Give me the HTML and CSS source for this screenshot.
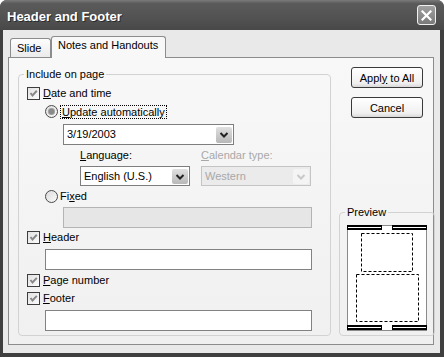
FILE: index.html
```html
<!DOCTYPE html>
<html lang="en">
<head>
    <meta charset="UTF-8">
    <title>Header and Footer</title>
    <link rel="stylesheet" href="styles.css">
</head>
<body>
    <div class="window">
        <div class="titlebar">
            <span class="title">Header and Footer</span>
            <span class="close">
                <svg width="11" height="11" viewBox="0 0 11 11"><path d="M1.5 1.5 L9.5 9.5 M9.5 1.5 L1.5 9.5" stroke="#fff" stroke-width="2.2" stroke-linecap="square"/></svg>
            </span>
        </div>

        <div class="body">
            <div class="tabs">
                <div class="tab">Slide</div>
                <div class="tab active">Notes and Handouts</div>
            </div>

            <div class="panel">
                <fieldset class="group main">
                    <legend>Include on page</legend>

                    <div class="row r-date">
                        <span class="check"></span>
                        <span class="label"><u>D</u>ate and time</span>
                    </div>
                    <div class="row r-auto">
                        <span class="radio on"></span>
                        <span class="label focus"><u>U</u>pdate automatically</span>
                    </div>
                    <div class="combo date-combo">
                        <span class="value">3/19/2003</span>
                        <span class="arrow"></span>
                    </div>
                    <div class="lang-labels">
                        <span class="lang-label"><u>L</u>anguage:</span>
                        <span class="lang-label disabled"><u>C</u>alendar type:</span>
                    </div>
                    <div class="lang-combos">
                        <div class="combo small">
                            <span class="value">English (U.S.)</span>
                            <span class="arrow"></span>
                        </div>
                        <div class="combo small disabled">
                            <span class="value">Western</span>
                            <span class="arrow"></span>
                        </div>
                    </div>
                    <div class="row r-fixed">
                        <span class="radio"></span>
                        <span class="label">Fi<u>x</u>ed</span>
                    </div>
                    <div class="textbox fixed-box disabled"></div>

                    <div class="row r-header">
                        <span class="check"></span>
                        <span class="label"><u>H</u>eader</span>
                    </div>
                    <div class="textbox wide r-header-box"></div>

                    <div class="row r-page">
                        <span class="check"></span>
                        <span class="label"><u>P</u>age number</span>
                    </div>
                    <div class="row r-footer">
                        <span class="check"></span>
                        <span class="label"><u>F</u>ooter</span>
                    </div>
                    <div class="textbox wide r-footer-box"></div>
                </fieldset>

                <div class="side">
                    <div class="buttons">
                        <button>Appl<u>y</u> to All</button>
                        <button class="cancel">Cancel</button>
                    </div>

                    <fieldset class="group preview">
                        <legend>Preview</legend>
                        <svg class="page" width="80" height="106" viewBox="0 0 80 106">
                            <rect x="0.5" y="0.5" width="79" height="105" fill="#fff" stroke="#8a8a8a"/>
                            <!-- header bars -->
                            <rect x="0" y="0" width="35" height="5" fill="#000"/>
                            <rect x="1" y="2" width="33" height="1" fill="#fff"/>
                            <rect x="45" y="0" width="35" height="5" fill="#000"/>
                            <rect x="46" y="2" width="33" height="1" fill="#fff"/>
                            <!-- slide + notes area -->
                            <rect x="14.5" y="8.5" width="51" height="38" fill="none" stroke="#000" stroke-dasharray="3 2"/>
                            <rect x="9.5" y="49.5" width="62" height="47" fill="none" stroke="#000" stroke-dasharray="3 2"/>
                            <!-- footer bars -->
                            <rect x="0" y="100" width="35" height="5" fill="#000"/>
                            <rect x="1" y="102" width="33" height="1" fill="#fff"/>
                            <rect x="45" y="100" width="35" height="5" fill="#000"/>
                            <rect x="46" y="102" width="33" height="1" fill="#fff"/>
                        </svg>
                    </fieldset>
                </div>
            </div>
        </div>
    </div>
</body>
</html>
```

FILE: styles.css
```css
body {
    margin: 0;
    font-family: "Liberation Sans", Arial, sans-serif;
    font-size: 11px;
    line-height: 13px;
    color: #000;
    background-color: #fff;
}

.window {
    width: 444px;
    height: 357px;
    display: flex;
    flex-direction: column;
    background-color: #3f3f3f;
    border-radius: 7px 7px 0 0;
    overflow: hidden;
}

/* title bar */
.titlebar {
    height: 30px;
    flex-shrink: 0;
    display: flex;
    align-items: center;
    justify-content: space-between;
    padding: 0 8px 0 7px;
    background: linear-gradient(#7a7a7a, #5a5a5a 12%, #525252 60%, #484848);
}

.title {
    color: #fff;
    font-weight: bold;
    font-size: 13px;
    text-shadow: 1px 1px 0 #2a2a2a;
    margin-top: 2px;
}

.close {
    width: 17px;
    height: 18px;
    border: 1px solid #f0f0f0;
    border-radius: 3px;
    background: linear-gradient(#a0a0a0, #7a7a7a);
    display: flex;
    align-items: center;
    justify-content: center;
}

/* dialog body */
.body {
    flex: 1;
    background-color: #e9e9e9;
    margin: 0 4px 4px 3px;
    padding: 6px 0 0 5px;
}

.tabs {
    display: flex;
    align-items: flex-end;
    height: 21px;
    padding-left: 2px;
}

.tab {
    box-sizing: border-box;
    height: 19px;
    width: 41px;
    padding: 3px 0 0 6px;
    border: 1px solid #8c8c8c;
    border-bottom: none;
    border-radius: 3px 3px 0 0;
    background: linear-gradient(#fdfdfd, #ebebeb);
    white-space: nowrap;
}

.tab.active {
    height: 22px;
    width: 115px;
    padding: 2px 0 0 6px;
    margin-bottom: -1px;
    background: #f8f8f8;
    position: relative;
    z-index: 1;
}

.panel {
    box-sizing: border-box;
    width: 426px;
    display: flex;
    padding: 9px 7px 8px 9px;
    border: 1px solid #8c8c8c;
    background: linear-gradient(#f8f8f8, #f0f0f0);
}

/* group boxes */
.group {
    margin: 0;
    border: 1px solid #d2d2d2;
    border-radius: 4px;
}

.group legend {
    padding: 0 2px;
    line-height: 13px;
}

.main {
    box-sizing: border-box;
    width: 304px;
    margin-top: 1px;
    padding: 0 8px 4px 8px;
}

.main legend {
    margin-left: -3px;
}

.row {
    display: flex;
    align-items: center;
    height: 13px;
}

.label u,
.lang-label u,
button u {
    text-decoration: underline;
}

.check {
    box-sizing: border-box;
    width: 13px;
    height: 13px;
    margin-right: 3px;
    border: 1px solid #3e3e3e;
    background: linear-gradient(135deg, #e2e2e2, #fbfbfb);
    background-image: url("data:image/svg+xml;utf8,<svg xmlns='http://www.w3.org/2000/svg' width='11' height='11'><path d='M2.5 5 L4.5 7.5 L8.8 2.8' fill='none' stroke='%23888' stroke-width='2'/></svg>"), linear-gradient(135deg, #e2e2e2, #fbfbfb);
}

.radio {
    box-sizing: border-box;
    width: 13px;
    height: 13px;
    margin-right: 2px;
    border: 1px solid #4a4a4a;
    border-radius: 50%;
    background: linear-gradient(135deg, #dcdcdc, #fafafa);
}

.radio.on {
    background: radial-gradient(circle, #8a8a8a 0 2.5px, #b8b8b8 3.5px, transparent 4px), linear-gradient(135deg, #dcdcdc, #fafafa);
}

.focus {
    border: 1px dotted #000;
    padding: 0 1px;
    line-height: 12px;
}

.r-date { margin-top: 6px; }
.r-auto { margin-top: 5px; margin-left: 18px; }
.r-fixed { margin-top: 4px; margin-left: 18px; }
.r-header { margin-top: 3px; }
.r-page { margin-top: 4px; }
.r-footer { margin-top: 5px; }

/* combo boxes */
.combo {
    box-sizing: border-box;
    display: flex;
    align-items: center;
    justify-content: space-between;
    height: 21px;
    border: 1px solid #7e7e7e;
    background-color: #fff;
    padding: 0 1px 0 3px;
}

.date-combo {
    width: 171px;
    margin: 6px 0 0 36px;
}

.arrow {
    width: 16px;
    height: 16px;
    border-radius: 2px;
    background: url("data:image/svg+xml;utf8,<svg xmlns='http://www.w3.org/2000/svg' width='16' height='16'><path d='M4.5 6 L8 9.5 L11.5 6' fill='none' stroke='%23222' stroke-width='2'/></svg>"), linear-gradient(#e0e0e0, #b8b8b8);
}

.lang-labels {
    display: flex;
    margin: 4px 0 0 53px;
}

.lang-label {
    width: 121px;
}

.lang-combos {
    display: flex;
    gap: 11px;
    margin: 4px 0 0 53px;
}

.combo.small {
    width: 110px;
    height: 20px;
}

.combo.small .arrow {
    height: 15px;
}

.disabled {
    color: #a8a8a8;
}

.combo.disabled {
    background-color: #ebebeb;
    border-color: #c4c4c4;
}

.combo.disabled .arrow {
    background: url("data:image/svg+xml;utf8,<svg xmlns='http://www.w3.org/2000/svg' width='16' height='16'><path d='M4.5 6 L8 9.5 L11.5 6' fill='none' stroke='%23c8c8c8' stroke-width='2'/></svg>"), #f4f4f4;
}

/* text boxes */
.textbox {
    box-sizing: border-box;
    height: 21px;
    border: 1px solid #828282;
    background-color: #fff;
}

.textbox.disabled {
    background-color: #e6e6e6;
    border-color: #b4b4b4;
}

.fixed-box {
    width: 249px;
    margin: 4px 0 0 36px;
}

.textbox.wide {
    width: 267px;
    margin: 5px 0 0 18px;
}

/* right column */
.side {
    width: 96px;
    margin-left: 8px;
    display: flex;
    flex-direction: column;
    justify-content: space-between;
}

.buttons {
    display: flex;
    flex-direction: column;
    align-items: center;
}

button {
    box-sizing: border-box;
    width: 72px;
    height: 21px;
    padding: 0;
    font-family: inherit;
    font-size: 11px;
    color: #000;
    border: 1px solid #3a3a3a;
    border-radius: 3px;
    background: linear-gradient(#ffffff, #f0f0f0 80%, #d8d8d8);
}

button.cancel {
    margin-top: 9px;
}

.preview {
    box-sizing: border-box;
    width: 96px;
    padding: 0 7px 4px 7px;
}

.preview legend {
    margin-left: -2px;
}

.page {
    display: block;
    margin-top: 6px;
}
```
